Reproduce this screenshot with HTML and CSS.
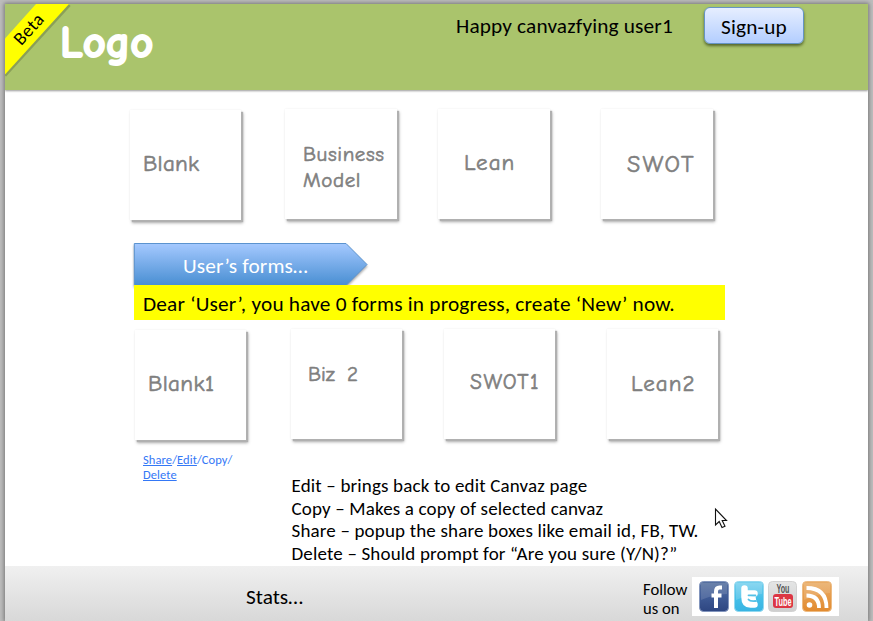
FILE: index.html
```
<!DOCTYPE html>
<html lang="en">
<head>
<meta charset="utf-8">
<title>Canvaz</title>
<link rel="stylesheet" href="styles.css">
</head>
<body>
<div class="page">
  <header class="header">
    <svg class="ribbon" width="70" height="76" viewBox="0 0 70 76" aria-hidden="true">
      <path class="ribbon-shade" d="M0 71.500L64.500 1"/>
      <path class="ribbon-band" d="M31 0H64L0 70.500V34.500Z"/>
    </svg>
    <span class="beta">Beta</span>
    <h1 class="logo">Logo</h1>
    <span class="greeting">Happy canvazfying user1</span>
    <button class="signup"><span>Sign-up</span></button>
  </header>

  <main class="content">
    <section class="cards templates">
      <article class="card low"><span class="label t1">Blank</span></article>
      <article class="card"><span class="label t2">Business<br>Model</span></article>
      <article class="card"><span class="label t3">Lean</span></article>
      <article class="card"><span class="label t4">SWOT</span></article>
    </section>

    <div class="banner">
      <svg class="arrow" width="240" height="52" viewBox="0 0 240 52" aria-hidden="true">
        <defs>
          <linearGradient id="blue" x1="0" y1="0" x2="0" y2="1">
            <stop offset="0" stop-color="#a5c9ff"/>
            <stop offset="1" stop-color="#488ed2"/>
          </linearGradient>
        </defs>
        <path d="M3.300 1.500H215L236 22.500L215 43.500H3.300Z" fill="url(#blue)" stroke="#5b93cf"/>
      </svg>
      <h2 class="banner-text">User’s forms…</h2>
    </div>
    <p class="notice"><span>Dear ‘User’, you have 0 forms in progress, create ‘New’ now.</span></p>

    <section class="cards saved">
      <article class="card low"><span class="label s1">Blank1</span></article>
      <article class="card"><span class="label s2">Biz&nbsp; 2</span></article>
      <article class="card"><span class="label s3">SWOT1</span></article>
      <article class="card"><span class="label s4">Lean2</span></article>
    </section>

    <div class="details">
      <nav class="actions"><u>Share</u>/<u>Edit</u>/Copy/<br><u>Delete</u></nav>
      <ul class="notes">
        <li>Edit – brings back to edit Canvaz page</li>
        <li>Copy – Makes a copy of selected canvaz</li>
        <li>Share – popup the share boxes like email id, FB, TW.</li>
        <li>Delete – Should prompt for “Are you sure (Y/N)?”</li>
      </ul>
    </div>
  </main>

  <footer class="footer">
    <span class="stats">Stats…</span>
    <span class="follow"><span>Follow</span><span>us on</span></span>
    <div class="social">
      <svg width="147" height="39" viewBox="0 0 147 39">
        <defs>
          <linearGradient id="fb" x1="0" y1="0" x2="0" y2="1"><stop offset="0" stop-color="#56719f"/><stop offset=".5" stop-color="#3f5b96"/><stop offset="1" stop-color="#2e4681"/></linearGradient>
          <linearGradient id="tw" x1="0" y1="0" x2="0" y2="1"><stop offset="0" stop-color="#77d0ee"/><stop offset=".55" stop-color="#45bfe8"/><stop offset="1" stop-color="#38b4e2"/></linearGradient>
          <linearGradient id="yt" x1="0" y1="0" x2="0" y2="1"><stop offset="0" stop-color="#e4e5e5"/><stop offset="1" stop-color="#cfcfcf"/></linearGradient>
          <linearGradient id="rs" x1="0" y1="0" x2="0" y2="1"><stop offset="0" stop-color="#e9ad68"/><stop offset="1" stop-color="#e28a2e"/></linearGradient>
        </defs>
        <rect x="7.500" y="4.500" width="29" height="30" rx="4" fill="url(#fb)" stroke="#8295bd"/>
        <path d="M9 6H35V17Q22 17 9 23Z" fill="#fff" opacity=".13"/>
        <path d="M30 10.500H27.500Q24 10.500 24 14.500V31M19.500 18.500H29.500" fill="none" stroke="#fff" stroke-width="4"/>
        <rect x="42.500" y="4.500" width="29" height="30" rx="4" fill="url(#tw)" stroke="#92d8ef"/>
        <path d="M44 6H70V17Q57 17 44 23Z" fill="#fff" opacity=".16"/>
        <path d="M52.500 11.500V20Q52.500 27.500 58.500 27.500H62.500M53 16.500H62.500" fill="none" stroke="#fff" stroke-width="6.500" stroke-linecap="round"/>
        <path d="M56 16V20Q58 23 64 22" fill="none" stroke="#fff" stroke-width="5"/>
        <path d="M56.500 18.300H63.500M56.500 22.500Q58 24.500 63.500 24" fill="none" stroke="#55c1e7" stroke-width="1.800" stroke-linecap="round"/>
        <rect x="76.500" y="4.500" width="28" height="30" rx="4" fill="url(#yt)" stroke="#d2d2d2"/>
        <rect x="81" y="17" width="20" height="14" rx="3" fill="#dc3644"/>
        <text class="yt you" x="84.500" y="16" textLength="13" lengthAdjust="spacingAndGlyphs">You</text>
        <text class="yt tube" x="82.500" y="28.500" textLength="17" lengthAdjust="spacingAndGlyphs">Tube</text>
        <rect x="110.500" y="4.500" width="29" height="30" rx="4" fill="url(#rs)" stroke="#edbb83"/>
        <path d="M112 6H138V16Q125 17 112 23Z" fill="#fff" opacity=".13"/>
        <circle cx="117.500" cy="28" r="2.800" fill="#fff"/>
        <path d="M114.500 18.500Q127 18.500 127 31M114.500 11Q134.500 11 134.500 31" fill="none" stroke="#fff" stroke-width="3.800"/>
      </svg>
    </div>
  </footer>
</div>
<svg class="cursor" width="15" height="22" viewBox="0 0 15 22" aria-hidden="true">
  <path d="M1.500 2V18L5.200 14.500L8 20.500L11 19.200L8.200 13.500H12.500Z" fill="#fff" stroke="#111" stroke-width="1.100"/>
</svg>
</body>
</html>
```
FILE: styles.css
```
* { box-sizing: border-box; }

body {
  margin: 0;
  width: 873px;
  height: 621px;
  padding: 4px 5px 0;
  overflow: hidden;
  background: #bdbdbd;
  color: #000;
  font-family: Carlito, Calibri, Lato, sans-serif;
}

h1, h2, p, ul { margin: 0; padding: 0; font-weight: 400; }

span, h1, h2, li { white-space: nowrap; }

.page {
  display: flex;
  flex-direction: column;
  width: 863px;
  height: 617px;
  background: #fff;
  box-shadow: 0 0 4px 1px #777;
}

.header {
  position: relative;
  display: flex;
  align-items: flex-start;
  flex: none;
  height: 86px;
  background: #aac46c;
  box-shadow: 0 1px 2px #999;
}

.ribbon { position: absolute; left: 0; top: 0; }
.ribbon-band { fill: #ff0; }
.ribbon-shade { stroke: #7d9050; stroke-width: 3; opacity: .7; }

.beta {
  position: absolute;
  left: 6px;
  top: 15px;
  font-size: 18.500px;
  line-height: 20px;
  letter-spacing: .4px;
  transform: rotate(-48deg);
}

.logo {
  width: 95px;
  margin: 11px 0 0 55px;
  color: #fff;
  font: 700 44.500px/56px "Comic Sans MS", "Comic Neue", Lato, sans-serif;
  -webkit-text-stroke: 1.800px #fff;
}

.greeting {
  width: 248px;
  margin: 10px 0 0 301px;
  font-size: 21.300px;
  line-height: 24px;
  letter-spacing: .15px;
}

.signup {
  width: 100px;
  height: 37px;
  margin-top: 3px;
  padding: 3px 0 0;
  border: 1px solid #6594c4;
  border-radius: 6px;
  background: linear-gradient(#e6eeff, #b3ceff);
  box-shadow: 0 2px 3px #56672e;
  color: #000;
  font: 21.300px/24px Carlito, Calibri, Lato, sans-serif;
  letter-spacing: .15px;
}

.content { flex: none; height: 476px; }

.cards {
  display: grid;
  grid-template-columns: 155px 153px 163px 114px;
  height: 134px;
}
.templates { padding: 19px 0 0 125px; }
.saved {
  grid-template-columns: 156px 153px 163px 114px;
  height: 130px;
  padding: 9px 0 0 130px;
}

.card {
  width: 112px;
  height: 110px;
  background: #fff;
  box-shadow: 2px 2px 1px #b0b0b0, 2px 3px 3px #aaa, 0 0 2px #eee;
  color: #7f7f7f;
  font: 23px/26px "Comic Sans MS", "Comic Neue", Lato, sans-serif;
  -webkit-text-stroke: .600px #7f7f7f;
}
.saved .card { width: 111px; }
.card.low { margin-top: 1px; width: 111px; }

.label { display: block; }
.t1 { padding: 41px 0 0 13px; letter-spacing: .3px; }
.t2 { padding: 32px 0 0 18px; font-size: 21px; letter-spacing: .6px; }
.t3 { padding: 41px 0 0 26px; letter-spacing: 1px; }
.t4 { padding: 42px 0 0 26px; font-size: 24px; letter-spacing: 2.200px; }
.s1 { padding: 41px 0 0 13px; letter-spacing: .4px; }
.s2 { padding: 32px 0 0 17px; font-size: 21px; word-spacing: -1px; }
.s3 { padding: 40px 0 0 26px; font-size: 21.500px; letter-spacing: 1.600px; }
.s4 { padding: 42px 0 0 24px; letter-spacing: 1.100px; }

.banner {
  position: relative;
  height: 61px;
  padding: 29px 0 0 178px;
}
.arrow {
  position: absolute;
  left: 126px;
  top: 18px;
  filter: drop-shadow(0 2px 1px #aaa);
}
.banner-text {
  position: relative;
  color: #fff;
  font-size: 21.300px;
  line-height: 26px;
  letter-spacing: .16px;
}

.notice {
  position: relative;
  width: 591px;
  height: 35px;
  margin-left: 129px;
  padding: 6px 0 0 9px;
  background: #ff0;
  font-size: 21.300px;
  line-height: 26px;
  letter-spacing: .2px;
}

.details { display: flex; padding: 2px 0 0 138px; }

.actions {
  width: 148.500px;
  color: #3478f6;
  font-size: 12.500px;
  line-height: 15px;
  letter-spacing: .08px;
}

.notes {
  padding-top: 23px;
  list-style: none;
  font-size: 19px;
  line-height: 22.700px;
  letter-spacing: .16px;
}

.footer {
  display: flex;
  flex: none;
  align-items: flex-start;
  height: 55px;
  padding-left: 241px;
  background: linear-gradient(#f0f0f0, #d8d8d8);
}
.stats { width: 397px; margin-top: 18px; font-size: 21.300px; line-height: 26px; }
.follow {
  display: flex;
  flex-direction: column;
  width: 49px;
  margin-top: 14px;
  font-size: 16.600px;
  line-height: 19px;
}
.social { height: 39px; margin-top: 11px; background: #fff; }
.social svg { display: block; }
.yt { font-family: "Liberation Sans", sans-serif; font-weight: 700; }
.you { font-size: 12px; fill: #555; }
.tube { font-size: 12px; fill: #fff; }

.cursor { position: absolute; left: 714px; top: 507px; }
```
